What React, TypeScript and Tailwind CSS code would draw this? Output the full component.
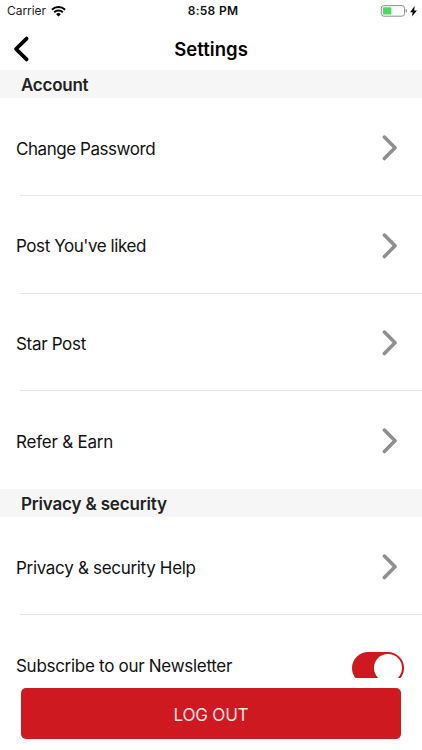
import React, { useState } from "react";

const accountItems = [
  { label: "Change Password", spacing: "tracking-[-0.45px]" },
  { label: "Post You've liked", spacing: "tracking-[-0.43px]" },
  { label: "Star Post", spacing: "tracking-[-0.32px]" },
  { label: "Refer & Earn", spacing: "tracking-[-0.22px]" },
];

const StatusBar = () => (
  <div className="grid h-[22px] shrink-0 grid-cols-3 items-center pl-[7px] pr-[5px] text-[12px] leading-[22px]">
    <div className="flex items-center gap-[5px]">
      <span className="tracking-[-0.05px] text-[#222]">Carrier</span>
      <svg width="15" height="11" viewBox="0 0 15 11" fill="none" stroke="#000" strokeWidth="2">
        <path d="M.9 3.7a9.6 9.6 0 0 1 13.2 0" />
        <path d="M3.2 6.3a6.2 6.2 0 0 1 8.6 0" />
        <path d="M7.5 10.6 5.1 8.3a3.4 3.4 0 0 1 4.8 0z" fill="#000" stroke="none" />
      </svg>
    </div>
    <span className="pl-[2px] text-center font-semibold tracking-[0.3px] text-[#111]">8:58 PM</span>
    <div className="flex items-center justify-end gap-[3px]">
      <svg width="27" height="12" viewBox="0 0 27 12" fill="none">
        <rect x="1.3" y="0.6" width="23.2" height="10.6" rx="2.6" stroke="#8e8e8e" />
        <rect x="3" y="2.3" width="8.4" height="7.2" rx="0.6" fill="#4cd964" />
        <path d="M25.7 4v3.8c1.6-.6 1.6-3.2 0-3.8z" fill="#8e8e8e" />
      </svg>
      <svg width="7" height="11" viewBox="0 0 7 11">
        <path d="M4.6 0 .1 6.2h2.6L2 10.6 6.9 4.5H4.2z" fill="#000" />
      </svg>
    </div>
  </div>
);

type SectionTitleProps = {
  spacing: string;
  children: React.ReactNode;
};

const SectionTitle = ({ spacing, children }: SectionTitleProps) => (
  <h2
    className={`h-7 shrink-0 bg-[#f6f6f6] pl-[21px] pt-px text-[17px] font-semibold leading-7 text-[#222] ${spacing}`}
  >
    {children}
  </h2>
);

const Chevron = () => (
  <svg className="mr-1.5" width="16" height="28" viewBox="0 0 16 28" fill="none">
    <path
      d="M2.4 3.1 13 13.8 2.4 24.5"
      stroke="#8f8f8f"
      strokeWidth="3.6"
      strokeLinecap="round"
      strokeLinejoin="round"
    />
  </svg>
);

type RowProps = {
  label: string;
  spacing: string;
  last?: boolean;
  children: React.ReactNode;
};

const Row = ({ label, spacing, last, children }: RowProps) => (
  <div className="flex h-[97.8px] shrink-0 flex-col">
    <div className={`flex flex-1 items-center justify-between pl-4 pr-[18px] ${last ? "pt-[2px]" : "pt-[3px]"}`}>
      <span className={`pt-[1.6px] text-[17px] leading-6 text-[#111] ${spacing}`}>{label}</span>
      {children}
    </div>
    {!last && <div className="ml-5 h-px bg-[#e6e6e6]" />}
  </div>
);

const App = () => {
  const [subscribed, setSubscribed] = useState(true);

  return (
    <main className="flex h-[750px] w-full flex-col overflow-hidden bg-white font-['Inter','Liberation_Sans',sans-serif]">
      <StatusBar />

      <header className="grid h-12 shrink-0 grid-cols-[60px_1fr_60px] items-center pt-[5px]">
        <button aria-label="Back" className="pl-[13px]">
          <svg width="17" height="28" viewBox="0 0 17 28" fill="none">
            <path
              d="M13.6 3.6 3 14l10.6 10.4"
              stroke="#000"
              strokeWidth="3.8"
              strokeLinecap="round"
              strokeLinejoin="round"
            />
          </svg>
        </button>
        <h1 className="text-center text-[18.5px] font-semibold leading-6 tracking-[0.05px] text-black">Settings</h1>
      </header>

      {/* scrolling list, cut off by the footer */}
      <div className="flex h-[608px] shrink-0 flex-col overflow-hidden">
        <SectionTitle spacing="tracking-[-0.25px]">Account</SectionTitle>
        {accountItems.map((item, i) => (
          <Row
            key={item.label}
            label={item.label}
            spacing={item.spacing}
            last={i === accountItems.length - 1}
          >
            <Chevron />
          </Row>
        ))}

        <SectionTitle spacing="tracking-[-0.17px]">Privacy &amp; security</SectionTitle>
        <Row label="Privacy & security Help" spacing="tracking-[-0.31px]">
          <Chevron />
        </Row>
        <Row label="Subscribe to our Newsletter" spacing="tracking-[-0.29px]">
          <button
            role="switch"
            aria-checked={subscribed}
            aria-label="Newsletter"
            onClick={() => setSubscribed(!subscribed)}
            className={`mr-[0.5px] mt-1.5 flex h-8 w-[52px] items-center rounded-full px-[2px] ${
              subscribed ? "justify-end bg-[#cf1920]" : "justify-start bg-gray-300"
            }`}
          >
            <span className="h-7 w-7 rounded-full bg-white shadow-[0_1px_2px_rgba(0,0,0,0.2)]" />
          </button>
        </Row>
      </div>

      <footer className="px-[20.6px] pt-[10.4px]">
        <button className="h-[51px] w-full rounded-[5px] bg-[#cf1920] pt-[3px] text-[17px] tracking-[-0.2px] text-[#fbe4e4]">
          LOG OUT
        </button>
      </footer>
    </main>
  );
};

export default App;
